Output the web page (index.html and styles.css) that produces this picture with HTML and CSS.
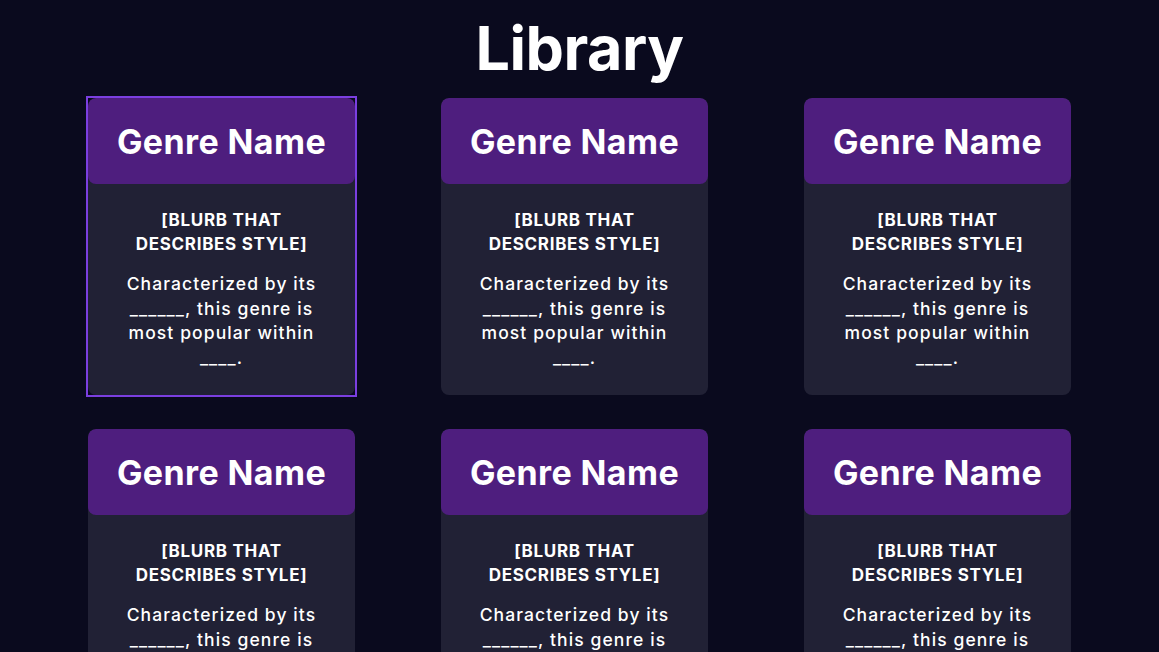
FILE: index.html
```html
<!DOCTYPE html>
<html lang="en">
<head>
<meta charset="utf-8">
<title>Library</title>
<link rel="stylesheet" href="styles.css">
</head>
<body>
<main class="page">
  <h1 class="page-title">Library</h1>
  <section class="genre-grid">
    <a class="card-link active" href="#">
      <div class="card">
        <div class="card-head"><h2>Genre Name</h2></div>
        <div class="card-body">
          <p class="blurb">[BLURB THAT DESCRIBES STYLE]</p>
          <p class="desc">Characterized by its ______, this genre is most popular within ____.</p>
        </div>
      </div>
    </a>
    <a class="card-link" href="#">
      <div class="card">
        <div class="card-head"><h2>Genre Name</h2></div>
        <div class="card-body">
          <p class="blurb">[BLURB THAT DESCRIBES STYLE]</p>
          <p class="desc">Characterized by its ______, this genre is most popular within ____.</p>
        </div>
      </div>
    </a>
    <a class="card-link" href="#">
      <div class="card">
        <div class="card-head"><h2>Genre Name</h2></div>
        <div class="card-body">
          <p class="blurb">[BLURB THAT DESCRIBES STYLE]</p>
          <p class="desc">Characterized by its ______, this genre is most popular within ____.</p>
        </div>
      </div>
    </a>
    <a class="card-link" href="#">
      <div class="card">
        <div class="card-head"><h2>Genre Name</h2></div>
        <div class="card-body">
          <p class="blurb">[BLURB THAT DESCRIBES STYLE]</p>
          <p class="desc">Characterized by its ______, this genre is most popular within ____.</p>
        </div>
      </div>
    </a>
    <a class="card-link" href="#">
      <div class="card">
        <div class="card-head"><h2>Genre Name</h2></div>
        <div class="card-body">
          <p class="blurb">[BLURB THAT DESCRIBES STYLE]</p>
          <p class="desc">Characterized by its ______, this genre is most popular within ____.</p>
        </div>
      </div>
    </a>
    <a class="card-link" href="#">
      <div class="card">
        <div class="card-head"><h2>Genre Name</h2></div>
        <div class="card-body">
          <p class="blurb">[BLURB THAT DESCRIBES STYLE]</p>
          <p class="desc">Characterized by its ______, this genre is most popular within ____.</p>
        </div>
      </div>
    </a>
  </section>
</main>
</body>
</html>
```
FILE: styles.css
```css
html, body {
  margin: 0;
  padding: 0;
  background: #0a0a1e;
  color: #ffffff;
  font-family: Inter, "Noto Sans", sans-serif;
}

.page {
  display: flex;
  flex-direction: column;
  align-items: stretch;
}

.page-title {
  margin: 11px 0 12px;
  text-align: center;
  font-size: 61px;
  line-height: 75px;
  font-weight: 700;
  letter-spacing: -0.5px;
}

.genre-grid {
  display: grid;
  grid-template-columns: 353px 363px 267px;
  row-gap: 34px;
  margin-left: 88px;
}

.card-link {
  display: block;
  width: 267px;
  color: inherit;
  text-decoration: none;
}

.card-link.active {
  outline: 2px solid #7b3fe0;
}

.card {
  background: #212135;
  border-radius: 8px;
  overflow: hidden;
}

.card-head {
  height: 86px;
  display: flex;
  align-items: center;
  justify-content: center;
  background: #4e1e7e;
  border-radius: 8px;
}

.card-head h2 {
  margin: 0;
  font-size: 34px;
  font-weight: 700;
  letter-spacing: 0.4px;
}

.card-body {
  padding: 24px 30px 25px;
  text-align: center;
}

.blurb {
  margin: 0 0 16px;
  font-size: 17px;
  line-height: 24px;
  font-weight: 700;
  letter-spacing: 0.7px;
}

.desc {
  margin: 0;
  font-size: 17.5px;
  line-height: 24.5px;
  font-weight: 500;
  letter-spacing: 1.1px;
}
```
